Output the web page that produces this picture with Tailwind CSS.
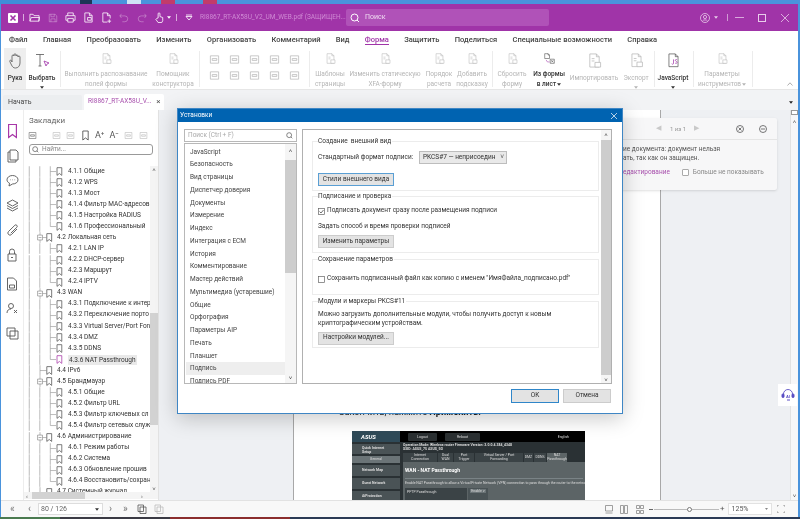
<!DOCTYPE html>
<html lang="ru">
<head>
<meta charset="UTF-8">
<title>Установки</title>
<script src="https://cdn.jsdelivr.net/npm/@tailwindcss/browser@4"></script>
</head>
<body class="font-['Roboto',sans-serif] text-[7px] text-[#333] overflow-hidden">
<svg class="hidden">
  <symbol id="doc" viewBox="0 0 16 16"><path d="M3 1h7l3 3v11H3zM10 1v3h3M5 6h3M5 8.500h3" fill="none" stroke="currentColor" stroke-width=".8"/><path d="M8.500 10h6v5h-6z" fill="#fff" stroke="currentColor" stroke-width=".8"/></symbol>
  <symbol id="mini" viewBox="0 0 12 12"><path d="M1.500 2h9v8h-9zM3.500 5h5v2h-5z" fill="none" stroke="currentColor" stroke-width=".8"/></symbol>
  <symbol id="bm" viewBox="0 0 10 12"><path d="M2 1h6v10L5 8.700 2 11z" fill="none" stroke="currentColor" stroke-width=".9"/></symbol>
  <symbol id="caret" viewBox="0 0 6 4"><path d="M0 0h6L3 4z" fill="currentColor"/></symbol>
  <symbol id="l3" viewBox="0 0 46 11"><path d="M5.500 0v11M16.500 0v11M27.500 0v11M27.500 5.500h6" stroke="#9a9a9a" stroke-width=".7" fill="none"/><path d="M34.500 1.500h5v8l-2.500-2-2.500 2z" fill="none" stroke="#555" stroke-width=".8"/></symbol>
  <symbol id="l3e" viewBox="0 0 46 11"><path d="M5.500 0v11M16.500 0v11M27.500 0v5.500h6" stroke="#9a9a9a" stroke-width=".7" fill="none"/><path d="M34.500 1.500h5v8l-2.500-2-2.500 2z" fill="none" stroke="#555" stroke-width=".8"/></symbol>
  <symbol id="l3s" viewBox="0 0 46 11"><path d="M5.500 0v11M16.500 0v11M27.500 0v5.500h6" stroke="#9a9a9a" stroke-width=".7" fill="none"/><path d="M34.500 1.500h5v8l-2.500-2-2.500 2z" fill="none" stroke="#a838a8" stroke-width=".8"/></symbol>
  <symbol id="l2" viewBox="0 0 34 11"><path d="M5.500 0v11M16.500 0v3M16.500 8v3M19 5.500h4" stroke="#9a9a9a" stroke-width=".7" fill="none"/><path d="M14 3h5v5h-5zM15 5.500h3" stroke="#777" stroke-width=".6" fill="#fff"/><path d="M23.500 1.500h5v8l-2.500-2-2.500 2z" fill="none" stroke="#555" stroke-width=".8"/></symbol>
  <symbol id="l2n" viewBox="0 0 34 11"><path d="M5.500 0v11M16.500 0v11M16.500 5.500h6.500" stroke="#9a9a9a" stroke-width=".7" fill="none"/><path d="M23.500 1.500h5v8l-2.500-2-2.500 2z" fill="none" stroke="#555" stroke-width=".8"/></symbol>
</svg>

<div class="relative w-[800px] h-[519px] overflow-hidden flex flex-col bg-[#4a93dc] blur-[0.35px]">
  <!-- обои сверху -->
  <div class="h-[4px] flex shrink-0">
    <i class="w-[80px] bg-[#3f8ed8]"></i><i class="w-[12px] bg-[#1d3557]"></i><i class="w-[35px] bg-[#4a93dc]"></i><i class="w-[14px] bg-[#cfe3f5]"></i><i class="w-[20px] bg-[#4a93dc]"></i><i class="w-[14px] bg-[#c23b6b]"></i><i class="w-[28px] bg-[#4a93dc]"></i><i class="w-[14px] bg-[#c23b6b]"></i>
  </div>

  <div class="flex-1 flex flex-col min-h-0 border-l border-r-[2px] border-[#4a93dc] bg-white">
    <!-- заголовок окна -->
    <div class="h-[27px] bg-[#a034a8] flex items-center text-white shrink-0 relative">
      <svg class="w-[10px] h-[10px] ml-[7px]" viewBox="0 0 10 10"><rect width="10" height="10" rx="1" fill="#fff"/><path d="M2.500 2.500l5 5M7.500 2.500l-5 5" stroke="#a034a8" stroke-width="1.600"/></svg>
      <i class="w-px h-[7px] bg-white/60 ml-[5px]"></i>
      <svg class="w-[11px] h-[11px] ml-[5px] text-white/85" viewBox="0 0 12 12" fill="none" stroke="currentColor"><path d="M1 10V2.500h3.500l1 1.500H11v6zM1 10l1.500-4h9L10.500 10"/></svg>
      <svg class="w-[10px] h-[10px] ml-[8px] text-white/35" viewBox="0 0 12 12" fill="none" stroke="currentColor"><path d="M1.500 1.500h7l2 2v7h-9zM3.500 1.500v3h4v-3M3.500 10.500V7h5v3.500"/></svg>
      <svg class="w-[11px] h-[11px] ml-[7px] text-white/85" viewBox="0 0 12 12" fill="none" stroke="currentColor"><path d="M3 4V1h6v3M3 9H1V4h10v5H9M3 7h6v4H3z"/></svg>
      <svg class="w-[11px] h-[11px] ml-[7px] text-white/85" viewBox="0 0 12 12" fill="none" stroke="currentColor"><path d="M2 1h5l3 3v7H2zM7 1v3h3M5 6h4v3H5z"/></svg>
      <svg class="w-[11px] h-[11px] ml-[7px] text-white/85" viewBox="0 0 12 12" fill="none" stroke="currentColor"><path d="M2 1h5l3 3v3M7 1v3h3M2 1v10h5M9 8v4M7 10h4"/></svg>
      <svg class="w-[10px] h-[10px] ml-[7px] text-white/35" viewBox="0 0 12 12" fill="none" stroke="currentColor"><path d="M3 1L1 3.500 3 6M1 3.500h6a3.500 3.500 0 010 7H4"/></svg>
      <svg class="w-[10px] h-[10px] ml-[8px] text-white/35" viewBox="0 0 12 12" fill="none" stroke="currentColor"><path d="M9 1l2 2.500L9 6M11 3.500H5a3.500 3.500 0 000 7h3"/></svg>
      <svg class="w-[11px] h-[11px] ml-[7px] text-white/90" viewBox="0 0 12 12" fill="none" stroke="currentColor"><path d="M4.500 6.500V2a1 1 0 012 0v3l3 1v3.500l-1 2H4.500L2 8l1-1z"/></svg>
      <svg class="w-[4px] h-[3px] ml-[2px]"><use href="#caret"/></svg>
      <i class="w-px h-[7px] bg-white/60 ml-[5px]"></i>
      <svg class="w-[8px] h-[7px] ml-[8px] text-white/80" viewBox="0 0 8 7" fill="none" stroke="currentColor"><path d="M1 1h6M1 2.500h6L4 6z"/></svg>
      <span class="ml-[7px] w-[146px] whitespace-nowrap overflow-hidden text-[#cf8ad4] text-[6.500px]">RI8867_RT-AX58U_V2_UM_WEB.pdf (ЗАЩИЩЕН...</span>
      <div class="w-[203px] h-[17px] bg-[#b052b8] rounded-[2px] flex items-center">
        <svg class="w-[10px] h-[10px] ml-[4px]" viewBox="0 0 10 10" fill="none" stroke="#fff"><circle cx="4.500" cy="4.500" r="3.500"/><path d="M7 7l2 2"/></svg>
        <span class="ml-[5px] text-[#f0dcf2] text-[7px]">Поиск</span>
      </div>
      <svg class="w-[10px] h-[10px] ml-[151px] text-[#e8cdea]" viewBox="0 0 10 10" fill="none" stroke="currentColor" stroke-width=".8"><circle cx="5" cy="5" r="4.500"/><circle cx="5" cy="4" r="1.600"/><path d="M2.500 8c.6-1.500 4.400-1.500 5 0"/></svg>
      <svg class="w-[4px] h-[3px] ml-[4px] text-[#e8cdea]"><use href="#caret"/></svg>
      <i class="w-px h-[7px] bg-white/50 ml-[9px]"></i>
      <i class="w-[9px] h-px bg-[#d9a9dc] ml-[7px]"></i>
      <i class="w-[8px] h-[8px] border border-[#e8cdea] ml-[14px]"></i>
      <svg class="w-[8px] h-[8px] ml-[15px]" viewBox="0 0 8 8" stroke="#e8cdea" stroke-width=".8"><path d="M0 0l8 8M8 0L0 8"/></svg>
    </div>

    <!-- меню -->
    <div class="h-[17px] flex items-center gap-[15.3px] pl-[8px] font-medium text-[7.500px] text-[#444] whitespace-nowrap shrink-0">
      <span>Файл</span><span>Главная</span><span>Преобразовать</span><span>Изменить</span><span>Организовать</span><span>Комментарий</span><span>Вид</span>
      <span class="text-[#a034a8] border-b border-[#a034a8] leading-[9px]">Форма</span>
      <span>Защитить</span><span>Поделиться</span><span>Специальные возможности</span><span>Справка</span>
    </div>

    <!-- лента -->
    <div class="h-[42px] flex pl-[3px] text-[#b5b5b5] text-[6.500px] leading-[9.500px] whitespace-nowrap border-b border-[#e6e6e6] shrink-0">
      <div class="w-[22px] bg-[#eeeeee] flex flex-col items-center text-[#333] font-medium">
        <svg class="w-[15px] h-[16px] mt-[5px]" viewBox="0 0 15 16" fill="none" stroke="#555" stroke-width=".8"><path d="M4 9V3a1 1 0 012 0V1.800a1 1 0 012 0V3a1 1 0 012 0v1a1 1 0 012 0v6c0 3-2 5-4.500 5-2 0-3-1-4-3L1.800 8.500c-.5-1 .8-1.800 1.500-1z"/></svg>
        <span class="mt-[5px]">Рука</span>
      </div>
      <div class="w-[32px] flex flex-col items-center text-[#333] font-medium">
        <svg class="w-[15px] h-[15px] mt-[5px]" viewBox="0 0 15 15" fill="none" stroke="#555" stroke-width=".8"><path d="M1 1.500h8M5 1.500V13M3.500 13h3"/><path d="M9 8l5 2-2 1-1 2z" stroke="#a034a8"/></svg>
        <span class="mt-[6px]">Выбрать</span>
        <svg class="w-[4px] h-[3px] mt-[2px] text-[#333]"><use href="#caret"/></svg>
      </div>
      <i class="w-px h-[36px] my-[3px] ml-[2px] bg-[#ececec]"></i>
      <div class="w-[90px] flex flex-col items-center"><svg class="w-[15px] h-[15px] mt-[5px]"><use href="#doc"/></svg><span class="mt-[6px]">Выполнить распознавание</span><span>полей формы</span></div>
      <div class="w-[44px] flex flex-col items-center"><svg class="w-[15px] h-[15px] mt-[5px]"><use href="#doc"/></svg><span class="mt-[6px]">Помощник</span><span>конструктора</span></div>
      <i class="w-px h-[36px] my-[3px] ml-[4px] bg-[#ececec]"></i>
      <div class="ml-[4px] w-[100px] grid grid-cols-5 grid-rows-2 justify-items-center items-center h-[38px] py-[3px]">
        <svg class="w-[11px] h-[11px]"><use href="#mini"/></svg><svg class="w-[11px] h-[11px]"><use href="#mini"/></svg><svg class="w-[11px] h-[11px]"><use href="#mini"/></svg><svg class="w-[11px] h-[11px]"><use href="#mini"/></svg><svg class="w-[11px] h-[11px]"><use href="#mini"/></svg>
        <svg class="w-[11px] h-[11px]"><use href="#mini"/></svg><svg class="w-[11px] h-[11px]"><use href="#mini"/></svg><svg class="w-[11px] h-[11px]"><use href="#mini"/></svg><svg class="w-[11px] h-[11px]"><use href="#mini"/></svg><svg class="w-[11px] h-[11px]"><use href="#mini"/></svg>
      </div>
      <i class="w-px h-[36px] my-[3px] ml-[5px] bg-[#ececec]"></i>
      <div class="w-[40px] flex flex-col items-center"><svg class="w-[15px] h-[15px] mt-[5px]"><use href="#doc"/></svg><span class="mt-[6px]">Шаблоны</span><span>страницы</span></div>
      <div class="w-[70px] flex flex-col items-center"><svg class="w-[15px] h-[15px] mt-[5px]"><use href="#doc"/></svg><span class="mt-[6px]">Изменить статическую</span><span>XFA-форму</span></div>
      <div class="w-[38px] flex flex-col items-center"><svg class="w-[15px] h-[15px] mt-[5px]"><use href="#doc"/></svg><span class="mt-[6px]">Порядок</span><span>расчета</span></div>
      <div class="w-[28px] flex flex-col items-center"><svg class="w-[15px] h-[15px] mt-[5px]"><use href="#doc"/></svg><span class="mt-[6px]">Добавить</span><span>подсказку</span></div>
      <i class="w-px h-[36px] my-[3px] ml-[6px] bg-[#ececec]"></i>
      <div class="w-[38px] flex flex-col items-center"><svg class="w-[15px] h-[15px] mt-[5px]"><use href="#doc"/></svg><span class="mt-[6px]">Сбросить</span><span>форму</span></div>
      <div class="w-[36px] flex flex-col items-center text-[#333] font-medium"><svg class="w-[15px] h-[15px] mt-[5px] text-[#444]" viewBox="0 0 16 16" fill="none" stroke="currentColor" stroke-width=".8"><path d="M1 1h5l2 2v5H1zM6 1v2h2M9 9h6v6H9zM10.500 10.500l3 3M13.500 10.500l-3 3"/><path d="M3 10l2 3h3" stroke="#a034a8"/></svg><span class="mt-[6px]">Из формы</span><span class="flex items-center gap-[1px]">в лист<svg class="w-[4px] h-[3px]"><use href="#caret"/></svg></span></div>
      <div class="w-[54px] flex flex-col items-center"><svg class="w-[15px] h-[15px] mt-[5px]"><use href="#doc"/></svg><span class="mt-[6px]">Импортировать</span></div>
      <div class="w-[30px] flex flex-col items-center"><svg class="w-[15px] h-[15px] mt-[5px]"><use href="#doc"/></svg><span class="mt-[6px]">Экспорт</span><svg class="w-[4px] h-[3px] mt-[3px]"><use href="#caret"/></svg></div>
      <i class="w-px h-[36px] my-[3px] ml-[3px] bg-[#ececec]"></i>
      <div class="w-[36px] flex flex-col items-center text-[#333] font-medium"><svg class="w-[15px] h-[15px] mt-[5px] text-[#555]" viewBox="0 0 16 16" fill="none" stroke="currentColor" stroke-width=".8"><path d="M3 1h7l3 3v11H3zM10 1v3h3"/><path d="M8 7v4.500c0 1-1.500 1-2 .3M12 7.500c-1-.8-2.300-.3-2 .8.300.9 2 .8 2 2s-1.500 1.400-2.300.6" stroke="#a034a8"/></svg><span class="mt-[6px]">JavaScript</span><svg class="w-[4px] h-[3px] mt-[3px]"><use href="#caret"/></svg></div>
      <i class="w-px h-[36px] my-[3px] ml-[2px] bg-[#ececec]"></i>
      <div class="w-[56px] flex flex-col items-center"><svg class="w-[15px] h-[15px] mt-[5px]"><use href="#doc"/></svg><span class="mt-[6px]">Параметры</span><span class="flex items-center gap-[1px]">инструментов<svg class="w-[4px] h-[3px]"><use href="#caret"/></svg></span></div>
      <i class="w-px h-[36px] my-[3px] ml-[2px] bg-[#ececec]"></i>
      <svg class="w-[6px] h-[4px] ml-[34px] mt-[34px]" viewBox="0 0 6 4" fill="none" stroke="#999" stroke-width=".8"><path d="M.5 3.500L3 .8l2.500 2.700"/></svg>
    </div>

    <!-- вкладки -->
    <div class="h-[20px] bg-[#f2f3f5] flex items-end pl-[2px] shrink-0 relative">
      <div class="w-[79px] h-[15px] bg-[#eceef0] rounded-t-[2px] flex items-center pl-[5px] text-[#444]">Начать</div>
      <div class="w-[80px] h-[16px] ml-[2px] bg-white rounded-t-[2px] flex items-center pl-[4px] text-[#a850ad] text-[6.500px] whitespace-nowrap">RI8867_RT-AX58U_V...<span class="ml-[5px] text-[#555] text-[8px] leading-none">×</span></div>
      <svg class="w-[4px] h-[3px] ml-auto mr-[5px] mb-[6px] text-[#222]"><use href="#caret"/></svg>
    </div>

    <!-- основная часть -->
    <div class="flex-1 flex min-h-0">
      <!-- значки слева -->
      <div class="w-[23px] shrink-0 flex flex-col items-center text-[#555] border-r border-[#ededed] pt-[13px]">
        <svg class="w-[13px] h-[16px] text-[#a838a8]" viewBox="0 0 10 12"><use href="#bm"/></svg>
        <svg class="w-[13px] h-[14px] mt-[10px]" viewBox="0 0 13 14" fill="none" stroke="currentColor" stroke-width=".9"><path d="M4 1h6l2 2v8H4zM4 3H2v10h8v-2"/></svg>
        <svg class="w-[13px] h-[13px] mt-[11px]" viewBox="0 0 13 13" fill="none" stroke="currentColor" stroke-width=".9"><path d="M6.500 1.500c3 0 5.500 1.800 5.500 4.300s-2.500 4.200-5.500 4.200L3 12l.5-2.800C2 8.500 1 7.300 1 5.800 1 3.300 3.500 1.500 6.500 1.500zM4 5.800h.5M6.300 5.800h.5M8.600 5.800h.5"/></svg>
        <svg class="w-[13px] h-[13px] mt-[12px]" viewBox="0 0 13 13" fill="none" stroke="currentColor" stroke-width=".9"><path d="M6.500 1L12 4 6.500 7 1 4zM1 6.500l5.500 3 5.500-3M1 9l5.500 3L12 9"/></svg>
        <svg class="w-[13px] h-[13px] mt-[12px]" viewBox="0 0 13 13" fill="none" stroke="currentColor" stroke-width=".9"><path d="M11 5L5.500 10.500a2 2 0 01-3-3L8.800 1.300a1.400 1.400 0 012 2L4.800 9.200"/></svg>
        <svg class="w-[12px] h-[14px] mt-[11px]" viewBox="0 0 12 14" fill="none" stroke="currentColor" stroke-width=".9"><path d="M2 6h8v7H2zM3.500 6V3.500a2.500 2.500 0 015 0V6M5 9.500h2"/></svg>
        <svg class="w-[12px] h-[14px] mt-[15px]" viewBox="0 0 12 14" fill="none" stroke="currentColor" stroke-width=".9"><path d="M1.500 1h6l3 3v9h-9zM3.500 8h5v3h-5z"/></svg>
        <svg class="w-[13px] h-[13px] mt-[11px]" viewBox="0 0 13 13" fill="none" stroke="currentColor" stroke-width=".9"><circle cx="5" cy="4" r="2.500"/><path d="M1 11c0-3 2-4 4-4M8 8l3 3M11 8l-3 3"/></svg>
        <svg class="w-[13px] h-[13px] mt-[12px]" viewBox="0 0 13 13" fill="none" stroke="currentColor" stroke-width=".9"><path d="M1 1h8v8H1zM4 4h8v8H4z"/></svg>
      </div>

      <!-- закладки -->
      <div class="w-[135px] shrink-0 flex flex-col border-r border-[#e2e2e2] bg-white">
        <div class="pl-[5px] pt-[5px] text-[8px] leading-[11px] text-[#666]">Закладки</div>
        <div class="h-[14px] mt-[2px] flex items-center pl-[4px] gap-[5.5px] text-[#bbb]">
          <svg class="w-[9px] h-[9px] text-[#666]"><use href="#mini"/></svg>
          <svg class="w-[9px] h-[9px] ml-[9px]"><use href="#mini"/></svg>
          <svg class="w-[9px] h-[9px]"><use href="#mini"/></svg>
          <svg class="w-[9px] h-[11px] text-[#444]" viewBox="0 0 10 12"><use href="#bm"/></svg>
          <span class="text-[#555] text-[9px] leading-none w-[9px]">A⁺</span>
          <span class="text-[#555] text-[9px] leading-none w-[9px]">A⁻</span>
          <svg class="w-[9px] h-[9px]"><use href="#mini"/></svg>
          <svg class="w-[9px] h-[9px]"><use href="#mini"/></svg>
        </div>
        <div class="h-[11px] mx-[5px] mt-[2px] border border-[#999] rounded-[3px] flex items-center pl-[2px] gap-[3px] text-[#888] text-[6.500px]">
          <svg class="w-[7px] h-[7px]" viewBox="0 0 10 10" fill="none" stroke="#555"><circle cx="4.500" cy="4.500" r="3.500"/><path d="M7 7l2 2"/></svg>Найти...
        </div>
        <div class="flex-1 min-h-0 flex mt-[11px]">
          <div class="w-[126px] overflow-hidden text-[#333] text-[6.500px] whitespace-nowrap">
            <div class="flex items-center h-[11.070px]"><svg class="w-[44px] h-[11.070px] shrink-0" preserveAspectRatio="none" viewBox="0 0 44 11"><use href="#l3"/></svg>4.1.1 Общие</div>
            <div class="flex items-center h-[11.070px]"><svg class="w-[44px] h-[11.070px] shrink-0" preserveAspectRatio="none" viewBox="0 0 44 11"><use href="#l3"/></svg>4.1.2 WPS</div>
            <div class="flex items-center h-[11.070px]"><svg class="w-[44px] h-[11.070px] shrink-0" preserveAspectRatio="none" viewBox="0 0 44 11"><use href="#l3"/></svg>4.1.3 Мост</div>
            <div class="flex items-center h-[11.070px]"><svg class="w-[44px] h-[11.070px] shrink-0" preserveAspectRatio="none" viewBox="0 0 44 11"><use href="#l3"/></svg>4.1.4 Фильтр MAC-адресов</div>
            <div class="flex items-center h-[11.070px]"><svg class="w-[44px] h-[11.070px] shrink-0" preserveAspectRatio="none" viewBox="0 0 44 11"><use href="#l3"/></svg>4.1.5 Настройка RADIUS</div>
            <div class="flex items-center h-[11.070px]"><svg class="w-[44px] h-[11.070px] shrink-0" preserveAspectRatio="none" viewBox="0 0 44 11"><use href="#l3e"/></svg>4.1.6 Профессиональный</div>
            <div class="flex items-center h-[11.070px]"><svg class="w-[33px] h-[11.070px] shrink-0" preserveAspectRatio="none" viewBox="0 0 33 11"><use href="#l2"/></svg>4.2 Локальная сеть</div>
            <div class="flex items-center h-[11.070px]"><svg class="w-[44px] h-[11.070px] shrink-0" preserveAspectRatio="none" viewBox="0 0 44 11"><use href="#l3"/></svg>4.2.1 LAN IP</div>
            <div class="flex items-center h-[11.070px]"><svg class="w-[44px] h-[11.070px] shrink-0" preserveAspectRatio="none" viewBox="0 0 44 11"><use href="#l3"/></svg>4.2.2 DHCP-сервер</div>
            <div class="flex items-center h-[11.070px]"><svg class="w-[44px] h-[11.070px] shrink-0" preserveAspectRatio="none" viewBox="0 0 44 11"><use href="#l3"/></svg>4.2.3 Маршрут</div>
            <div class="flex items-center h-[11.070px]"><svg class="w-[44px] h-[11.070px] shrink-0" preserveAspectRatio="none" viewBox="0 0 44 11"><use href="#l3e"/></svg>4.2.4 IPTV</div>
            <div class="flex items-center h-[11.070px]"><svg class="w-[33px] h-[11.070px] shrink-0" preserveAspectRatio="none" viewBox="0 0 33 11"><use href="#l2"/></svg>4.3 WAN</div>
            <div class="flex items-center h-[11.070px]"><svg class="w-[44px] h-[11.070px] shrink-0" preserveAspectRatio="none" viewBox="0 0 44 11"><use href="#l3"/></svg>4.3.1 Подключение к интер</div>
            <div class="flex items-center h-[11.070px]"><svg class="w-[44px] h-[11.070px] shrink-0" preserveAspectRatio="none" viewBox="0 0 44 11"><use href="#l3"/></svg>4.3.2 Переключение порто</div>
            <div class="flex items-center h-[11.070px]"><svg class="w-[44px] h-[11.070px] shrink-0" preserveAspectRatio="none" viewBox="0 0 44 11"><use href="#l3"/></svg>4.3.3 Virtual Server/Port Fon</div>
            <div class="flex items-center h-[11.070px]"><svg class="w-[44px] h-[11.070px] shrink-0" preserveAspectRatio="none" viewBox="0 0 44 11"><use href="#l3"/></svg>4.3.4 DMZ</div>
            <div class="flex items-center h-[11.070px]"><svg class="w-[44px] h-[11.070px] shrink-0" preserveAspectRatio="none" viewBox="0 0 44 11"><use href="#l3"/></svg>4.3.5 DDNS</div>
            <div class="flex items-center h-[11.070px]"><svg class="w-[44px] h-[11.070px] shrink-0" preserveAspectRatio="none" viewBox="0 0 44 11"><use href="#l3s"/></svg><span class="bg-[#e9e9e9] px-[1px] leading-[10px]">4.3.6 NAT Passthrough</span></div>
            <div class="flex items-center h-[11.070px]"><svg class="w-[33px] h-[11.070px] shrink-0" preserveAspectRatio="none" viewBox="0 0 33 11"><use href="#l2n"/></svg>4.4 IPv6</div>
            <div class="flex items-center h-[11.070px]"><svg class="w-[33px] h-[11.070px] shrink-0" preserveAspectRatio="none" viewBox="0 0 33 11"><use href="#l2"/></svg>4.5 Брандмауэр</div>
            <div class="flex items-center h-[11.070px]"><svg class="w-[44px] h-[11.070px] shrink-0" preserveAspectRatio="none" viewBox="0 0 44 11"><use href="#l3"/></svg>4.5.1 Общие</div>
            <div class="flex items-center h-[11.070px]"><svg class="w-[44px] h-[11.070px] shrink-0" preserveAspectRatio="none" viewBox="0 0 44 11"><use href="#l3"/></svg>4.5.2 Фильтр URL</div>
            <div class="flex items-center h-[11.070px]"><svg class="w-[44px] h-[11.070px] shrink-0" preserveAspectRatio="none" viewBox="0 0 44 11"><use href="#l3"/></svg>4.5.3 Фильтр ключевых сл</div>
            <div class="flex items-center h-[11.070px]"><svg class="w-[44px] h-[11.070px] shrink-0" preserveAspectRatio="none" viewBox="0 0 44 11"><use href="#l3e"/></svg>4.5.4 Фильтр сетевых служ</div>
            <div class="flex items-center h-[11.070px]"><svg class="w-[33px] h-[11.070px] shrink-0" preserveAspectRatio="none" viewBox="0 0 33 11"><use href="#l2"/></svg>4.6 Администрирование</div>
            <div class="flex items-center h-[11.070px]"><svg class="w-[44px] h-[11.070px] shrink-0" preserveAspectRatio="none" viewBox="0 0 44 11"><use href="#l3"/></svg>4.6.1 Режим работы</div>
            <div class="flex items-center h-[11.070px]"><svg class="w-[44px] h-[11.070px] shrink-0" preserveAspectRatio="none" viewBox="0 0 44 11"><use href="#l3"/></svg>4.6.2 Система</div>
            <div class="flex items-center h-[11.070px]"><svg class="w-[44px] h-[11.070px] shrink-0" preserveAspectRatio="none" viewBox="0 0 44 11"><use href="#l3"/></svg>4.6.3 Обновление прошив</div>
            <div class="flex items-center h-[11.070px]"><svg class="w-[44px] h-[11.070px] shrink-0" preserveAspectRatio="none" viewBox="0 0 44 11"><use href="#l3e"/></svg>4.6.4 Восстановить/сохран</div>
            <div class="flex items-center h-[11.070px]"><svg class="w-[33px] h-[11.070px] shrink-0" preserveAspectRatio="none" viewBox="0 0 33 11"><use href="#l2n"/></svg>4.7 Системный журнал</div>
          </div>
          <!-- скроллбар дерева -->
          <div class="w-[8px] flex flex-col items-center bg-[#f4f4f4]">
            <span class="text-[#444] text-[6px] leading-[7px]">˄</span>
            <div class="mt-[140px] w-full h-[112px] bg-[#d2d2d2]"></div>
            <span class="mt-auto text-[#444] text-[6px] leading-[7px]">˅</span>
          </div>
        </div>
        <div class="h-[7px] mb-[1px] flex items-center bg-[#f4f4f4] text-[#444] text-[6px]">
          <span class="w-[8px] pl-[2px] leading-none">‹</span>
          <i class="w-[53px] h-full bg-[#d2d2d2]"></i>
          <span class="ml-[56px] leading-none">›</span>
        </div>
      </div>

      <!-- документ -->
      <div class="flex-1 flex min-w-0 relative bg-[#eef0f3]">
        <div class="w-[134px] shrink-0"></div>
        <div class="w-[368px] shrink-0 bg-white border-x border-[#a8a8a8] flex flex-col overflow-hidden">
          <div class="mt-[295px] h-[14px] pl-[45px] text-[9.200px] leading-[14px] text-[#222] whitespace-nowrap">Закончить, нажмите <b>Применить.</b></div>
          <!-- снимок роутера -->
          <div class="mt-[12px] ml-[58px] w-[233px] h-[69px] bg-[#2a3134] flex flex-col text-[#ddd] text-[3.500px] leading-[4px] whitespace-nowrap overflow-hidden shrink-0">
            <div class="h-[11px] bg-black flex items-center shrink-0">
              <span class="w-[48px] h-full bg-[#2f4a58] text-white italic font-bold text-[6px] leading-[11px] pl-[9px]">ASUS</span>
              <span class="ml-[8px] w-[29px] h-[8px] bg-[#2b3032] rounded-[1px] text-center leading-[8px]">Logout</span>
              <span class="ml-[8px] w-[35px] h-[8px] bg-[#2b3032] rounded-[1px] text-center leading-[8px]">Reboot</span>
              <span class="ml-auto mr-[16px]">English</span>
            </div>
            <div class="flex flex-1 min-h-0">
              <div class="w-[48px] shrink-0 flex flex-col bg-[#2a3134] pt-[2px] gap-[2px]">
                <div class="h-[11px] bg-[#4a5356] pl-[10px] pt-[2px] font-bold">Quick Internet<br>Setup</div>
                <div class="h-[7px] bg-[#6b7477] text-center leading-[7px]">General</div>
                <div class="h-[11px] bg-[#4a5356] pl-[10px] leading-[11px] font-bold">Network Map</div>
                <div class="h-[11px] bg-[#4a5356] pl-[10px] leading-[11px] font-bold">Guest Network</div>
                <div class="h-[11px] bg-[#4a5356] pl-[10px] leading-[11px] font-bold">AiProtection</div>
              </div>
              <div class="flex-1 min-w-0 flex flex-col pl-[3px]">
                <div class="h-[11px] pt-[1px] font-bold">Operation Mode: Wireless router  Firmware Version: 3.0.0.4.384_4348<br>SSID: ASUS_75  ASUS_5G</div>
                <div class="h-[9px] flex gap-[1px] shrink-0 text-center">
                  <span class="w-[34px] bg-[#3b4346]">Internet<br>Connection</span>
                  <span class="w-[15px] bg-[#3b4346]">Dual<br>WAN</span>
                  <span class="w-[20px] bg-[#3b4346]">Port<br>Trigger</span>
                  <span class="w-[48px] bg-[#3b4346]">Virtual Server / Port<br>Forwarding</span>
                  <span class="w-[9px] bg-[#3b4346] leading-[9px]">DMZ</span>
                  <span class="w-[12px] bg-[#3b4346] leading-[9px]">DDNS</span>
                  <span class="w-[20px] bg-[#5c6466]">NAT<br>Passthrough</span>
                </div>
                <div class="flex-1 bg-[#5c6466] px-[2px] pt-[5px]">
                  <div class="text-[5px] leading-[6px] font-bold text-white">WAN - NAT Passthrough</div>
                  <div class="mt-[5px] pt-[2px] border-t border-[#7a8386]">Enable NAT Passthrough to allow a Virtual Private Network (VPN) connection to pass through the router to the network clients.</div>
                  <div class="mt-[3px] flex h-[12px]"><span class="w-[62px] bg-[#3b4346] pl-[2px] leading-[9px]">PPTP Passthrough</span><span class="w-[20px] ml-[1px] bg-[#4a5356]"><span class="block w-[16px] mt-[1px] ml-[2px] bg-[#6b7477] text-center">Enable ˅</span></span></div>
                </div>
              </div>
            </div>
          </div>
        </div>
        <div class="flex-1"></div>
        <div class="w-[8px] shrink-0 flex flex-col items-center bg-[#f7f7f8] text-[#444] border-l border-[#e2e2e2]">
          <i class="w-full h-[5px] border border-[#999] bg-white"></i>
          <span class="mt-[3px] text-[6px] leading-[7px]">˄</span>
          <span class="mt-auto mb-[1px] text-[6px] leading-[7px]">˅</span>
        </div>

        <!-- панель сообщения -->
        <div class="absolute left-[461px] top-[8px] w-[157px] h-[72px] bg-[#f7f7f8] rounded-[2px] shadow-sm flex flex-col text-[#666] whitespace-nowrap">
          <div class="h-[22px] border-b border-[#e5e5e5] flex items-center text-[#999] text-[6px]">
            <span class="ml-[36px] text-[#c9c9c9] text-[7px]">◀</span><span class="ml-[9px]">1 из 1</span><span class="ml-[8px] text-[#c9c9c9] text-[7px]">▶</span>
            <svg class="w-[8px] h-[8px] ml-[37px]" viewBox="0 0 8 8" fill="none" stroke="#555" stroke-width=".8"><circle cx="4" cy="4" r="3.500"/><path d="M2.500 2.500l3 3M5.500 2.500l-3 3"/></svg>
            <svg class="w-[8px] h-[8px] ml-[15px]" viewBox="0 0 8 8" fill="none" stroke="#555" stroke-width=".8"><circle cx="4" cy="4" r="3.500"/><path d="M2 4h4"/></svg>
          </div>
          <div class="pl-[3px] pt-[5px] leading-[9px] text-[#555] text-[6.500px]">ие документа: документ нельзя<br>ать, так как он защищен.</div>
          <div class="pl-[3px] mt-[5px] flex items-center text-[6.500px]">
            <span class="text-[#a850ad]">едактирование</span>
            <i class="w-[7px] h-[7px] ml-[12px] border border-[#aaa] rounded-[1px] bg-white"></i>
            <span class="ml-[4px] text-[#888]">Больше не показывать</span>
          </div>
        </div>

        <!-- значок AI -->
        <div class="absolute right-[1px] top-[274px] w-[19px] h-[22px] bg-white flex items-center justify-center">
          <svg class="w-[14px] h-[14px]" viewBox="0 0 14 14" fill="none" stroke="#5a4fc4"><path d="M2.500 7V6a4.500 4.500 0 019 0v1" stroke-width=".9"/><rect x="1" y="6" width="2" height="3.500" rx=".8" fill="#5a4fc4"/><rect x="11" y="6" width="2" height="3.500" rx=".8" fill="#5a4fc4"/><path d="M6 12h3" stroke-width="1"/><text x="7" y="9.500" text-anchor="middle" font-size="4" stroke="none" fill="#5a4fc4" font-family="Liberation Sans, sans-serif" font-weight="700">AI</text></svg>
        </div>
      </div>
    </div>

    <!-- строка состояния -->
    <div class="h-[17px] shrink-0 bg-[#f8f8f8] border-t border-[#e2e2e2] flex items-center text-[#666] text-[7px] whitespace-nowrap">
      <span class="ml-[9px] w-[10px] text-[10px] leading-none text-[#777]">«</span>
      <span class="ml-[8px] w-[6px] text-[10px] leading-none text-[#777]">‹</span>
      <div class="ml-[4px] w-[65px] h-[12px] bg-white border border-[#ddd] flex items-center pl-[2px]">80 / 126<svg class="w-[4px] h-[3px] ml-auto mr-[3px] text-[#333]"><use href="#caret"/></svg></div>
      <span class="ml-[6px] w-[6px] text-[10px] leading-none text-[#777]">›</span>
      <span class="ml-[8px] w-[10px] text-[10px] leading-none text-[#777]">»</span>
      <svg class="w-[10px] h-[10px] ml-[4px] text-[#555]" viewBox="0 0 10 10" fill="none" stroke="currentColor" stroke-width=".8"><path d="M1 1h5.500v6.500H1zM3 3h6v6.500H3z"/></svg>
      <svg class="w-[10px] h-[10px] ml-[7px] text-[#bbb]" viewBox="0 0 10 10" fill="none" stroke="currentColor" stroke-width=".8"><path d="M1 1h5.500v6.500H1zM3 3h6v6.500H3z"/></svg>
      <div class="ml-[441px] flex items-center text-[#888]">
        <svg class="w-[8px] h-[9px]" viewBox="0 0 8 9" fill="none" stroke="currentColor" stroke-width=".8"><path d="M.5.5h7v5.500h-7zM.5 8h7"/></svg>
        <svg class="w-[8px] h-[9px] ml-[7px]" viewBox="0 0 8 9" fill="none" stroke="currentColor" stroke-width=".8"><path d="M.5.5h3v8h-3zM4.500.5h3v8h-3z"/></svg>
        <svg class="w-[8px] h-[9px] ml-[8px]" viewBox="0 0 8 9" fill="none" stroke="currentColor" stroke-width=".8"><path d="M.5.5h3v3h-3zM4.500.5h3v3h-3zM.5 5.500h3v3h-3zM4.500 5.500h3v3h-3z"/></svg>
        <i class="ml-[5px] w-[4px] h-px bg-[#666]"></i>
        <div class="w-[65px] h-px ml-[1px] bg-[#bbb] flex items-center"><i class="ml-[33px] w-[5px] h-[5px] rounded-full border border-[#777] bg-white shrink-0"></i></div>
        <span class="ml-[1px] text-[#555] text-[8px] leading-none">+</span>
        <div class="ml-[3px] w-[44px] h-[12px] bg-white border border-[#e2e2e2] flex items-center pl-[3px] text-[#555]">125%<svg class="w-[3px] h-[2px] ml-auto mr-[3px] text-[#888]"><use href="#caret"/></svg></div>
        <svg class="w-[8px] h-[8px] ml-[5px]" viewBox="0 0 8 8" fill="none" stroke="currentColor" stroke-width=".8"><path d="M0 2V0h2M6 0h2v2M8 6v2H6M2 8H0V6"/></svg>
      </div>
    </div>
  </div>

  <!-- панель задач -->
  <div class="h-[2px] shrink-0 flex">
    <i class="w-[60px] bg-[#4a7a4f]"></i><i class="w-[110px] bg-[#3a3a44]"></i><i class="w-[120px] bg-[#8b2e2e]"></i><i class="flex-1 bg-[#2b3a55]"></i>
  </div>

  <!-- окно «Установки» -->
  <div class="absolute left-[177px] top-[108px] w-[446px] h-[306px] bg-white border border-[#3f86c4] shadow-[0_4px_20px_rgba(0,0,0,0.22)] flex flex-col text-[#333] text-[6.500px] whitespace-nowrap">
    <div class="h-[13px] bg-[#0063b1] flex items-center justify-between pl-[2px] pr-[5px] text-white text-[6.500px] shrink-0">
      <span>Установки</span>
      <svg class="w-[6px] h-[6px]" viewBox="0 0 6 6" stroke="#fff" stroke-width=".7"><path d="M0 0l6 6M6 0L0 6"/></svg>
    </div>
    <div class="flex pt-[7px] pl-[6px] shrink-0">
      <div class="w-[113px] flex flex-col gap-[1px]">
        <div class="h-[13px] border border-[#b8b8b8] flex items-center justify-between pl-[3px] pr-[3px] text-[#aaa]">
          Поиск (Ctrl + F)
          <svg class="w-[7px] h-[7px]" viewBox="0 0 10 10" fill="none" stroke="#555"><circle cx="4.500" cy="4.500" r="3.500"/><path d="M7 7l2 2"/></svg>
        </div>
        <div class="h-[241px] border border-[#b8b8b8] flex overflow-hidden">
          <div class="flex-1 pl-[1px] pt-[1.500px] flex flex-col text-[#444]">
            <div class="h-[12.750px] shrink-0 pl-[4px] leading-[12.750px]">JavaScript</div>
            <div class="h-[12.750px] shrink-0 pl-[4px] leading-[12.750px]">Безопасность</div>
            <div class="h-[12.750px] shrink-0 pl-[4px] leading-[12.750px]">Вид страницы</div>
            <div class="h-[12.750px] shrink-0 pl-[4px] leading-[12.750px]">Диспетчер доверия</div>
            <div class="h-[12.750px] shrink-0 pl-[4px] leading-[12.750px]">Документы</div>
            <div class="h-[12.750px] shrink-0 pl-[4px] leading-[12.750px]">Измерение</div>
            <div class="h-[12.750px] shrink-0 pl-[4px] leading-[12.750px]">Индекс</div>
            <div class="h-[12.750px] shrink-0 pl-[4px] leading-[12.750px]">Интеграция с ECM</div>
            <div class="h-[12.750px] shrink-0 pl-[4px] leading-[12.750px]">История</div>
            <div class="h-[12.750px] shrink-0 pl-[4px] leading-[12.750px]">Комментирование</div>
            <div class="h-[12.750px] shrink-0 pl-[4px] leading-[12.750px]">Мастер действий</div>
            <div class="h-[12.750px] shrink-0 pl-[4px] leading-[12.750px]">Мультимедиа (устаревшие)</div>
            <div class="h-[12.750px] shrink-0 pl-[4px] leading-[12.750px]">Общие</div>
            <div class="h-[12.750px] shrink-0 pl-[4px] leading-[12.750px]">Орфография</div>
            <div class="h-[12.750px] shrink-0 pl-[4px] leading-[12.750px]">Параметры AIP</div>
            <div class="h-[12.750px] shrink-0 pl-[4px] leading-[12.750px]">Печать</div>
            <div class="h-[12.750px] shrink-0 pl-[4px] leading-[12.750px]">Планшет</div>
            <div class="h-[12.750px] shrink-0 pl-[4px] leading-[12.750px] bg-[#eeeeee]">Подпись</div>
            <div class="h-[12.750px] shrink-0 pl-[4px] leading-[12.750px]">Подпись PDF</div>
          </div>
          <div class="w-[11px] shrink-0 flex flex-col bg-[#f5f5f5] items-center text-[#333] text-[6px] leading-[7px]">
            <span class="mt-[3px]">˄</span>
            <i class="mt-[6px] w-full h-[113px] bg-[#cdcdcd]"></i>
            <span class="mt-auto mb-[2px]">˅</span>
          </div>
        </div>
      </div>
      <div class="ml-[5px] w-[310px] h-[255px] border border-[#b0b0b0] flex">
        <div class="w-[299px] pl-[9px] pr-[2px] pt-[6.500px] flex flex-col">
          <fieldset class="h-[54.500px] border border-[#ececec]">
            <legend class="ml-[5px] h-[9px] leading-[9px] pr-[1px]">Создание&nbsp; внешний вид</legend>
            <div class="mt-[5.500px] pl-[5px] flex items-center h-[13px]">
              <span class="w-[101px]">Стандартный формат подписи:</span>
              <div class="w-[88px] h-[13px] bg-[#e9e9e9] border border-[#bdbdbd] flex items-center pl-[3px] overflow-hidden">PKCS#7 — неприсоедин<span class="ml-auto mr-[2px] text-[#555]">˅</span></div>
            </div>
            <div class="mt-[9px] ml-[5px] w-[76px] h-[13px] bg-[#e3e3e3] border border-[#5a9fd4] flex items-center justify-center">Стили внешнего вида</div>
          </fieldset>
          <fieldset class="mt-[0.500px] h-[61.500px] border border-[#ececec]">
            <legend class="ml-[5px] h-[9px] leading-[9px] pr-[1px]">Подписание и проверка</legend>
            <div class="mt-[6px] pl-[5px] flex items-center h-[9px] gap-[2px]">
              <svg class="w-[7px] h-[7px]" viewBox="0 0 7 7"><rect x=".5" y=".5" width="6" height="6" fill="#fff" stroke="#666" stroke-width=".7"/><path d="M1.500 3.500l1.500 1.500 2.500-3" fill="none" stroke="#333" stroke-width=".7"/></svg>
              Подписать документ сразу после размещения подписи
            </div>
            <div class="mt-[6px] pl-[5px] h-[9px] leading-[9px]">Задать способ и время проверки подписей</div>
            <div class="mt-[4.500px] ml-[5px] w-[76px] h-[13px] bg-[#e3e3e3] border border-[#cccccc] flex items-center justify-center">Изменить параметры</div>
          </fieldset>
          <fieldset class="mt-[1.500px] h-[40.500px] border border-[#ececec]">
            <legend class="ml-[5px] h-[9px] leading-[9px] pr-[1px]">Сохранение параметров</legend>
            <div class="mt-[11px] pl-[5px] flex items-center h-[9px] gap-[2px]">
              <svg class="w-[7px] h-[7px]" viewBox="0 0 7 7"><rect x=".5" y=".5" width="6" height="6" fill="#fff" stroke="#666" stroke-width=".7"/></svg>
              Сохранить подписанный файл как копию с именем "ИмяФайла_подписано.pdf"
            </div>
          </fieldset>
          <fieldset class="mt-[1.500px] h-[51.500px] border border-[#ececec]">
            <legend class="ml-[5px] h-[9px] leading-[9px] pr-[1px]">Модули и маркеры PKCS#11</legend>
            <div class="mt-[4.500px] pl-[5px] leading-[9px]">Можно загрузить дополнительные модули, чтобы получить доступ к новым<br>криптографическим устройствам.</div>
            <div class="mt-[3.500px] ml-[5px] w-[76px] h-[13px] bg-[#e3e3e3] border border-[#cccccc] flex items-center justify-center">Настройки модулей...</div>
          </fieldset>
        </div>
        <div class="w-[10px] shrink-0 flex flex-col bg-[#f5f5f5] items-center text-[#333] text-[6px] leading-[7px]">
          <span class="mt-[1px]">˄</span>
          <i class="mt-[2px] w-full h-[235px] bg-[#cdcdcd]"></i>
          <span class="mt-auto">˅</span>
        </div>
      </div>
    </div>
    <div class="flex justify-end gap-[4px] pr-[11px] mt-[5px]">
      <div class="w-[48px] h-[14px] bg-[#e3e3e3] border border-[#2f86c9] flex items-center justify-center">OK</div>
      <div class="w-[48px] h-[14px] bg-[#e3e3e3] border border-[#cccccc] flex items-center justify-center">Отмена</div>
    </div>
  </div>
</div>
</body>
</html>
